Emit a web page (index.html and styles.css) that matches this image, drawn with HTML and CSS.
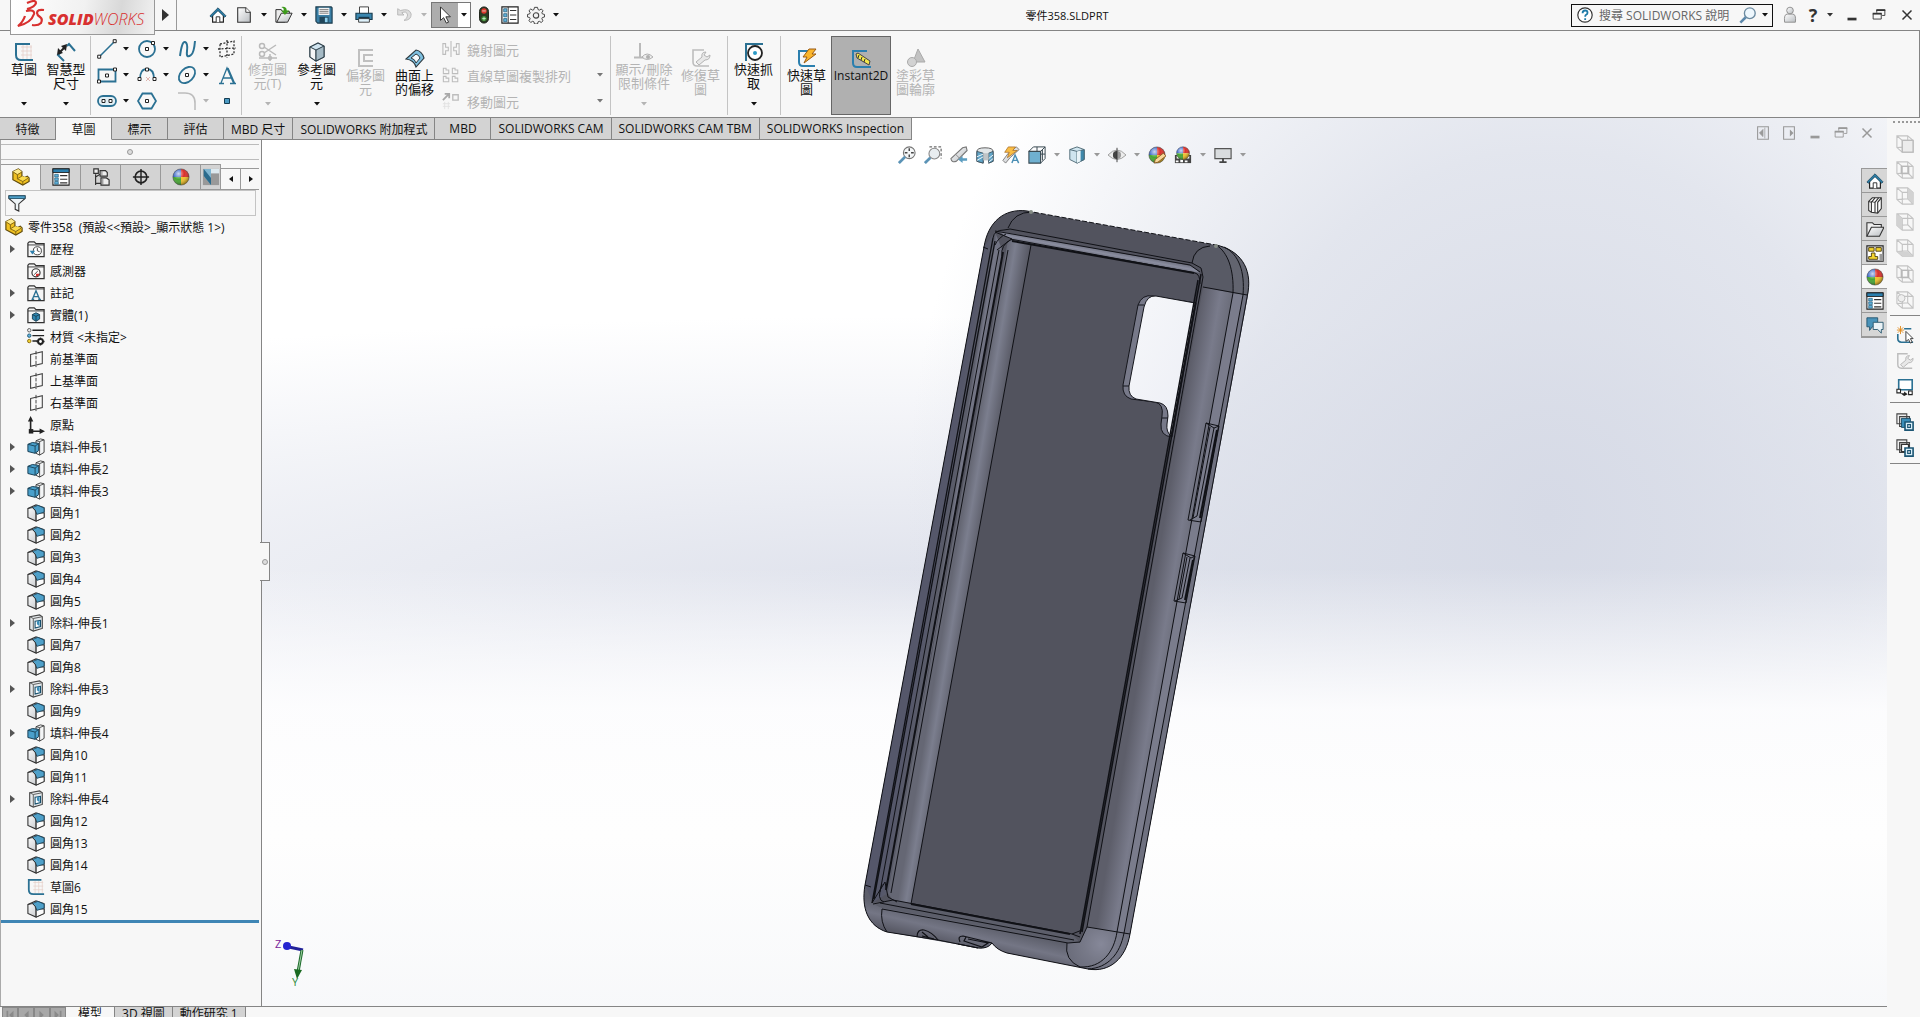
FILE: index.html
```html
<!DOCTYPE html>
<html lang="zh-Hant">
<head>
  <meta charset="UTF-8" />
  <meta name="viewport" content="width=device-width, initial-scale=1.0"/>
  <title>零件358.SLDPRT</title>
  <link rel="stylesheet" href="styles.css">
</head>
<body>

  <!-- Icon set -->
  <svg class="defs" aria-hidden="true">
    <defs>
      <linearGradient id="gBlue" x1="0" y1="0" x2="1" y2="1"><stop offset="0" stop-color="#7cc4e4"/><stop offset="1" stop-color="#256f96"/></linearGradient>
      <linearGradient id="gGrey" x1="0" y1="0" x2="1" y2="1"><stop offset="0" stop-color="#fff"/><stop offset="1" stop-color="#b9bdc1"/></linearGradient>
      <radialGradient id="gShine" cx=".35" cy=".3" r=".7"><stop offset="0" stop-color="#fff" stop-opacity=".75"/><stop offset=".5" stop-color="#fff" stop-opacity="0"/><stop offset="1" stop-color="#000" stop-opacity=".35"/></radialGradient>
    </defs>
    <symbol id="i-down" viewBox="0 0 6 4"><path d="M0 0h6L3 3.5z" fill="currentColor"/></symbol>
    <symbol id="i-home" viewBox="0 0 20 20"><path d="M4 10v8h12v-8l-6-6z" fill="#fff" stroke="#222" stroke-width="1.3"/><path d="M8 18v-6h4v6" fill="#fff" stroke="#222"/><path d="M1 11 10 2l9 9-1.500 1.500L10 5.200 2.500 12.500z" fill="#2b7fa8" stroke="#173f55" stroke-width=".8"/></symbol>
    <symbol id="i-new" viewBox="0 0 20 20"><path d="M3 2h9l5 5v11H3z" fill="url(#gGrey)" stroke="#333" stroke-width="1.200"/><path d="M12 2v5h5" fill="#fff" stroke="#333"/></symbol>
    <symbol id="i-open" viewBox="0 0 20 20"><path d="M1 4h6l1 2h8v3l-5 9H1z" fill="#ececec" stroke="#333" stroke-width="1.100"/><path d="M2 18 7 8h12l-5 10z" fill="url(#gGrey)" stroke="#333" stroke-width="1.100"/><path d="M7 1q6-1 6 4h3l-5 5-4-5h3q0-3-3-4z" fill="#3d9b1c"/></symbol>
    <symbol id="i-save" viewBox="0 0 20 20"><path d="M1 1h17l1 1v17H3l-2-2z" fill="#3a7fa5" stroke="#17384a" stroke-width="1.200"/><path d="M4 2h12v8H4z" fill="#f3f3f3"/><path d="M5 4h10M5 6h10M5 8h10" stroke="#777"/><path d="M5 12h10v7H5z" fill="#20465a"/><path d="M11 13h3v5h-3z" fill="#8fd0ee"/></symbol>
    <symbol id="i-print" viewBox="0 0 20 20"><path d="M5 1h10v8H5z" fill="#fff" stroke="#333"/><path d="M1 8h18v7H1z" fill="#3a86ae" stroke="#17384a" stroke-width="1.200"/><path d="M4 12h12v2H4z" fill="#16384c"/><path d="M4 14h12v4H4z" fill="#dff2fb" stroke="#333"/></symbol>
    <symbol id="i-undo" viewBox="0 0 20 20"><path d="M3 3v7h7L7.500 7.500Q13 5 14 10q0 4-4 6 8 0 8-7-2-7-12-4z" fill="#ddd" stroke="#b5b5b5"/></symbol>
    <symbol id="i-cursor" viewBox="0 0 20 20"><path d="M5 1v15l3.500-3 3 6 2.500-1-3-6h5z" fill="#fff" stroke="#333" stroke-width="1.100"/></symbol>
    <symbol id="i-light" viewBox="0 0 20 20"><rect x="5" y="1" width="10" height="18" rx="5" fill="#2c3a24" stroke="#141a11"/><circle cx="10" cy="5.500" r="3" fill="#e0362c"/><circle cx="10" cy="14" r="3" fill="#3f8a35"/><path d="M10 12v4M8 14h4M8 5.500h4" stroke="#dfe" stroke-width=".8"/></symbol>
    <symbol id="i-list" viewBox="0 0 20 20"><path d="M1 1h18v18H1z" fill="#fff" stroke="#222" stroke-width="1.300"/><path d="M8 1v18" stroke="#222"/><path d="M3 3h3.500v3.500H3zM3 8.500h3.500V12H3zM3 14h3.500v3.500H3z" fill="#5fb2dc" stroke="#1d5674" stroke-width=".8"/><path d="M10 5h7M10 10h7M10 15h7" stroke="#333" stroke-width="1.200"/></symbol>
    <symbol id="i-gear" viewBox="0 0 20 20"><path d="m8.300 1.500h3.400l.6 2.500 1.400.6 2.200-1.300 1.900 2-1.300 2.200.6 1.300 2.400.6v2.800l-2.400.6-.6 1.400 1.300 2.200-2 1.900-2.100-1.300-1.400.6-.6 2.400H8.300l-.6-2.400-1.400-.6-2.200 1.300-1.900-2 1.300-2.100-.6-1.400-2.400-.6V9.400l2.400-.6.6-1.400-1.300-2.200 2-1.900 2.100 1.300L7.700 4z" fill="#f3f3f3" stroke="#444" stroke-width="1.100"/><circle cx="10" cy="10.500" r="3" fill="none" stroke="#444" stroke-width="1.200"/></symbol>
    <symbol id="i-help" viewBox="0 0 20 20"><circle cx="10" cy="10" r="8" fill="#fff" stroke="#333" stroke-width="1.300"/><path d="M7.300 8q0-3 2.800-3 2.700 0 2.700 2.500 0 1.500-1.600 2.300-1 .6-1 2.200M10.200 13.500v2" fill="none" stroke="#1f7ba8" stroke-width="2"/></symbol>
    <symbol id="i-search" viewBox="0 0 20 20"><circle cx="12" cy="8" r="6" fill="#eef7fd" stroke="#6b8aa0" stroke-width="1.500"/><path d="m7.500 12.500-6 6" stroke="#5c88ab" stroke-width="2.800"/></symbol>
    <symbol id="i-user" viewBox="0 0 20 20"><path d="M4 18q-1-9 3-9h6q4 0 3 9z" fill="url(#gGrey)" stroke="#8a8a8a"/><circle cx="10" cy="5" r="3.700" fill="url(#gGrey)" stroke="#8a8a8a"/></symbol>
    <symbol id="i-min" viewBox="0 0 20 20"><path d="M5 13h10v3H5z" fill="currentColor"/></symbol>
    <symbol id="i-restore" viewBox="0 0 20 20"><path d="M7.500 7.500v-3h9v6h-3M3.500 8.500h9v6h-9z" fill="none" stroke="currentColor"/><path d="M7 4.500h10M3 8.500h10" stroke="currentColor" stroke-width="2"/></symbol>
    <symbol id="i-close" viewBox="0 0 20 20"><path d="m5 5 10 10M15 5 5 15" stroke="currentColor" stroke-width="1.600"/></symbol>
    <symbol id="i-paneL" viewBox="0 0 20 20"><path d="M4 3h12v14H4z" fill="none" stroke="currentColor" stroke-width="1.200"/><path d="M10 6v8l-4-4zM12 4v12" fill="currentColor" stroke="currentColor" stroke-width=".8"/></symbol>
    <symbol id="i-paneR" viewBox="0 0 20 20"><path d="M4 3h12v14H4z" fill="none" stroke="currentColor" stroke-width="1.200"/><path d="M11 6v8l4-4z" fill="currentColor"/></symbol>
    <symbol id="i-first" viewBox="0 0 16 16"><path d="M4 3h2v10H4zM12 3v10L7 8z" fill="#8a8a8a"/></symbol>
    <symbol id="i-prevtab" viewBox="0 0 16 16"><path d="M11 3v10L6 8z" fill="#8a8a8a"/></symbol>
    <symbol id="i-nexttab" viewBox="0 0 16 16"><path d="M5 3v10l5-5z" fill="#8a8a8a"/></symbol>
    <symbol id="i-last" viewBox="0 0 16 16"><path d="M10 3h2v10h-2zM4 3v10l5-5z" fill="#8a8a8a"/></symbol>

    <symbol id="i-sketch" viewBox="0 0 20 20"><path d="M7 5h11M7 9h11M7 13h11M9 3v14M13 3v14M17 3v14" stroke="#e6cfc9" stroke-width=".8"/><path d="M16 2H2v11q0 5 5 5h12" fill="none" stroke="#2b7193" stroke-width="2"/></symbol>
    <symbol id="i-dim" viewBox="0 0 20 20"><path d="m11 4 2-2 6 7M8 19l-6-6 3-3" fill="none" stroke="#2b7193" stroke-width="2"/><path d="m3 11 7-7" stroke="#222" stroke-width="2"/><path d="m1 13 1-7 5 5zM11 2l-1 7-5-5z" fill="#222"/></symbol>
    <symbol id="i-line" viewBox="0 0 20 20"><path d="M2 18 18 2" stroke="#2b7193" stroke-width="1.600"/><path d="M.7 16.200h3v3h-3zM16.200.7h3v3h-3z" fill="#fff" stroke="#222"/></symbol>
    <symbol id="i-circle" viewBox="0 0 20 20"><circle cx="10" cy="10" r="8" fill="none" stroke="#2b7193" stroke-width="1.800"/><path d="M8.500 8.500h3v3h-3zM14.500 2.500h3v3h-3z" fill="#fff" stroke="#222"/></symbol>
    <symbol id="i-spline" viewBox="0 0 20 20"><path d="M3 17Q5 2 8 3t2 9 4 4q3-2 4-14" fill="none" stroke="#2b7193" stroke-width="2"/></symbol>
    <symbol id="i-plane" viewBox="0 0 20 20"><path d="m3 5 14-3v13L3 18zM10 1v18M1 10l18-1" fill="none" stroke="#333" stroke-width="1.300" stroke-dasharray="2 1.500"/></symbol>
    <symbol id="i-rect" viewBox="0 0 20 20"><path d="M1.500 4.500h17v12h-17z" fill="none" stroke="#2b7193" stroke-width="1.800"/><path d="M8.500 9h3v3h-3zM.5 15h3v3h-3zM16.500 3h3v3h-3z" fill="#fff" stroke="#222"/></symbol>
    <symbol id="i-arc" viewBox="0 0 20 20"><path d="M3 14Q3 4 10 4t7 10" fill="none" stroke="#2b7193" stroke-width="1.800"/><path d="m9 12 4 4m0-4-4 4" stroke="#e0b4ae"/><path d="M1 12.500h3v3H1zM16 12.500h3v3h-3zM8.500 3h3v3h-3z" fill="#fff" stroke="#222"/></symbol>
    <symbol id="i-ellipse" viewBox="0 0 20 20"><ellipse cx="10" cy="10" rx="9.500" ry="6.500" fill="none" stroke="#2b7193" stroke-width="1.800" transform="rotate(-45 10 10)"/><path d="M8.500 8.500h3v3h-3z" fill="#fff" stroke="#222"/></symbol>
    <symbol id="i-text" viewBox="0 0 20 20"><path d="M2 18.500h5M13 18.500h6M4 18 10 3l6.500 15M11 3l6.500 15M6 13h8" fill="none" stroke="#2b7193" stroke-width="1.300"/></symbol>
    <symbol id="i-slot" viewBox="0 0 20 20"><rect x="1" y="5" width="18" height="10" rx="5" fill="#e3f0f6" stroke="#2b7193" stroke-width="1.800"/><path d="M5 8.500h3v3H5zM12 8.500h3v3h-3z" fill="#fff" stroke="#222"/></symbol>
    <symbol id="i-hex" viewBox="0 0 20 20"><path d="M5.500 2.500h9L19 10l-4.500 7.500h-9L1 10z" fill="none" stroke="#2b7193" stroke-width="1.800"/><path d="M8.500 8.500h3v3h-3z" fill="#fff" stroke="#222"/></symbol>
    <symbol id="i-fillet" viewBox="0 0 20 20"><path d="M1 2h7q10 0 10 10v7" fill="none" stroke="#bdbdbd" stroke-width="1.600"/></symbol>
    <symbol id="i-point" viewBox="0 0 20 20"><path d="M7.500 7.500h5v5h-5z" fill="#4b9ac4" stroke="#153d52"/></symbol>
    <symbol id="i-trim" viewBox="0 0 20 20"><g fill="none" stroke="#bababa" stroke-width="1.500"><circle cx="4" cy="4" r="2.500"/><circle cx="4" cy="12" r="2.500"/><path d="M6 5l12 8M6 11l12-8M1 16h18M12 12v7"/><circle cx="12" cy="16" r="1.500"/></g></symbol>
    <symbol id="i-cube" viewBox="0 0 20 20"><path d="m3 5 8-4 6 3v11l-8 4-6-4z" fill="#cfe3ee" stroke="#2a3c46" stroke-width="1.200"/><path d="m3 5 6 3v11l-6-4z" fill="#f4f6f7" stroke="#2a3c46"/><path d="m9 8 8-4v11l-8 4z" fill="#a5bac5" stroke="#2a3c46"/></symbol>
    <symbol id="i-offset" viewBox="0 0 20 20"><path d="M17 2H3v16h14M17 7H8v6h9" fill="none" stroke="#c0c0c0" stroke-width="2"/></symbol>
    <symbol id="i-surf" viewBox="0 0 20 20"><path d="m1 11 10-9q6 1 8 8l-8 9q-2-7-10-8z" fill="#7ec0e0" stroke="#2e3a40" stroke-width="1.100"/><path d="m6 10 5-4q3 1 4 4l-4 5q-1-4-5-5z" fill="#f7fbfd" stroke="#2e3a40"/></symbol>
    <symbol id="i-mirror" viewBox="0 0 20 20"><path d="M1 4h3v4h3v4H4v4H1zM19 4h-3v4h-3v4h3v4h3zM10 1v18" fill="none" stroke="#bdbdbd" stroke-width="1.200"/></symbol>
    <symbol id="i-pattern" viewBox="0 0 20 20"><path d="M1.500 2.500h3v2h3v4h-6zM11.500 2.500h3v2h3v4h-6zM1.500 11.500h3v2h3v4h-6zM11.500 11.500h3v2h3v4h-6z" fill="none" stroke="#bdbdbd" stroke-width="1.200"/></symbol>
    <symbol id="i-move" viewBox="0 0 20 20"><path d="m1 9 6-6M3 2h5v5" fill="none" stroke="#a9a9a9" stroke-width="2"/><path d="M12 3h6v6h-6z" fill="none" stroke="#bdbdbd" stroke-width="1.500"/><path d="M1 13h8M1 16h8M3 11v8M7 11v8" stroke="#e2e2e2"/></symbol>
    <symbol id="i-relation" viewBox="0 0 20 20"><path d="M6 1v15M0 15.500h13" stroke="#bababa" stroke-width="2"/><path d="M8 15q5-6 11 0-6 5-11 0z" fill="#eee" stroke="#b0b0b0"/><circle cx="14" cy="15" r="2" fill="#b0b0b0"/></symbol>
    <symbol id="i-repair" viewBox="0 0 20 20"><path d="M13 2H2v12q0 4 4 4h12" fill="none" stroke="#bdbdbd" stroke-width="1.600"/><path d="M5 14 11 9q-1-5 4-5l-2 3 3 2 3-2q0 5-5 5l-6 5z" fill="#e8e8e8" stroke="#b3b3b3"/></symbol>
    <symbol id="i-snap" viewBox="0 0 20 20"><path d="M2 19V2h17" fill="none" stroke="#2b7193" stroke-width="2"/><circle cx="11" cy="11" r="7" fill="#fff" stroke="#222" stroke-width="1.800"/><circle cx="11" cy="11" r="2" fill="#2b9ac6"/></symbol>
    <symbol id="i-rapid" viewBox="0 0 20 20"><path d="M12 3H2v11q0 4 4 4h12" fill="none" stroke="#2b7fae" stroke-width="2"/><path d="M12 1h7l-4 5h4L7 15l3-6H6z" fill="#fbb62c" stroke="#9a5b14"/></symbol>
    <symbol id="i-inst" viewBox="0 0 20 20"><path d="M16 2H2v12q0 4 4 4h14" fill="none" stroke="#2b7fae" stroke-width="2"/><path d="m5 5 2-1 12 8-1 4-12-7z" fill="#f5e84b" stroke="#444"/><path d="m8 6-1 3m4-1-1 3m4-1-1 3" stroke="#333"/></symbol>
    <symbol id="i-shade" viewBox="0 0 20 20"><path d="m12 1 7 13H7z" fill="#c2c2c2" stroke="#aaa"/><circle cx="6" cy="14" r="4.500" fill="#d2d2d2" stroke="#aaa"/></symbol>

    <symbol id="i-part" viewBox="0 0 20 20"><path d="M1 8V4l6-3 4 3v5l3 1.500L17 9l2 2v4l-7 4L1 13z" fill="#f0c020" stroke="#5f4a0c" stroke-width="1.300"/><path d="m1 4 6-3 4 3-5 3z" fill="#fce98a"/><path d="m6 12 5-3 8 2.500-7 3.500z" fill="#fbdc4f"/><path d="m1.500 4.500 4.500 3V12l6 3 6.500-4M6 7.500l5-3M12 15v3.500M6 12l5-3" fill="none" stroke="#7d6110"/></symbol>
    <symbol id="i-prop" viewBox="0 0 20 20"><path d="M1 1h18v18H1z" fill="#fff" stroke="#222" stroke-width="1.200"/><path d="M1 1h18v4H1z" fill="#2b7fae" stroke="#222"/><path d="M3 7h4v3H3zM3 11h4v3H3zM3 15h4v3H3z" fill="#5fb2dc" stroke="#1d5674" stroke-width=".7"/><path d="M9 8.500h8M9 12.500h8M9 16.500h8" stroke="#333" stroke-width="1.200"/></symbol>
    <symbol id="i-config" viewBox="0 0 20 20"><path d="M4 7v12M4 10l5-3M4 17h6" fill="none" stroke="#333" stroke-width="1.300"/><path d="M2 1h5v5H2zM9 3h6l2 2v4H9zM10 11h6l3 2v6h-9z" fill="#eee" stroke="#333" stroke-width="1.300"/><path d="M11 3v6M12 11v8" stroke="#777"/></symbol>
    <symbol id="i-target" viewBox="0 0 20 20"><circle cx="10" cy="10" r="6.500" fill="none" stroke="#222" stroke-width="1.800"/><path d="M10 1v18M1 10h18" stroke="#222" stroke-width="1.600"/></symbol>
    <symbol id="i-ball" viewBox="0 0 20 20"><path d="M10 10V1a9 9 0 0 0-9 9z" fill="#3a66c8"/><path d="M10 10h9a9 9 0 0 0-9-9z" fill="#d9302b"/><path d="M10 10H1a9 9 0 0 0 9 9z" fill="#46a533"/><path d="M10 10v9a9 9 0 0 0 9-9z" fill="#f1c12b"/><circle cx="10" cy="10" r="9" fill="url(#gShine)" stroke="#444" stroke-width=".6"/></symbol>
    <symbol id="i-cam" viewBox="0 0 20 20"><path d="M1 1h18v18H1z" fill="#999"/><path d="M2 1h8v18L2 9z" fill="#7fb5d0"/><path d="m2 1 8 10v8L2 9z" fill="#2b6b8c"/><path d="M10 1h9v5h-9z" fill="#dde9ef"/></symbol>
    <symbol id="i-filter" viewBox="0 0 20 20"><path d="M1 2h18v3l-7 6v8l-4-2v-6L1 5z" fill="#eef4f7" stroke="#333" stroke-width="1.200"/><path d="M1 2h18v3H1z" fill="#4ea0c9" stroke="#24536c"/></symbol>
    <symbol id="i-folder" viewBox="0 0 20 20"><path d="M1 18.500v-15L2.500 2H8l2 2h9v14.500z" fill="#f5f5f5" stroke="#333" stroke-width="1.400"/><path d="M1 5.500h18" stroke="#333"/></symbol>
    <symbol id="i-history" viewBox="0 0 20 20"><use href="#i-folder"/><circle cx="11.500" cy="12" r="4.500" fill="#fff" stroke="#333"/><path d="M11.500 9v3l2.500 1" fill="none" stroke="#333"/><path d="M3 12h6l-3 4z" fill="#2b7fae"/></symbol>
    <symbol id="i-sensor" viewBox="0 0 20 20"><use href="#i-folder"/><circle cx="10" cy="12" r="4.500" fill="#fff" stroke="#333" stroke-width="1.300"/><path d="m8 14 4-4" stroke="#333"/><path d="M10 13h4q-1 3-4 3z" fill="#d8302f"/></symbol>
    <symbol id="i-note" viewBox="0 0 20 20"><use href="#i-folder"/><path d="m6 17 4-9.500 4 9.500M7.500 14h5M5 17h3M12.500 17h3" fill="none" stroke="#2b7193" stroke-width="1.500"/></symbol>
    <symbol id="i-solid" viewBox="0 0 20 20"><use href="#i-folder"/><path d="m6 9.500 4-2 4 2v5l-4 2.500-4-2.500z" fill="#2f86b0" stroke="#173f55"/><path d="m6 9.500 4 2 4-2M10 11.500V17" fill="none" stroke="#173f55"/></symbol>
    <symbol id="i-material" viewBox="0 0 20 20"><path d="M6 2.500h13M6 8.500h13M6 14.500h6" stroke="#222" stroke-width="1.600"/><circle cx="2.500" cy="2.500" r="1.900" fill="#eee" stroke="#555"/><circle cx="2.500" cy="8.500" r="1.900" fill="#5fb2dc" stroke="#1d5674"/><circle cx="2.500" cy="14.500" r="1.900" fill="#f3d431" stroke="#8a6a10"/><circle cx="15" cy="15" r="2.700" fill="#fff" stroke="#222" stroke-width="2.200"/><path d="M15 10.500v2M15 17.500v2M10.500 15h2M17.500 15h2" stroke="#222" stroke-width="1.500"/></symbol>
    <symbol id="i-refplane" viewBox="0 0 20 20"><path d="m4 5 13-3v13L4 18z" fill="#fafafa" stroke="#444" stroke-width="1.200"/><path d="M10 1v18" stroke="#333" stroke-dasharray="4 1.500"/></symbol>
    <symbol id="i-origin" viewBox="0 0 20 20"><path d="M4 3v14h13" fill="none" stroke="#222" stroke-width="1.800"/><path d="M1 6 4 0l3 6zM14 14l6 3-6 3z" fill="#222"/><path d="M2 14.500h5v5H2z" fill="#222"/></symbol>
    <symbol id="i-boss" viewBox="0 0 20 20"><path d="m10 3 5-2 4 1v14l-5 3-4-2z" fill="#f3f5f6" stroke="#444" stroke-width="1.100"/><path d="M14 19V4l5-2M14 4l-4-1" fill="none" stroke="#444"/><path d="m1 7 5-2 7 1v8l-4 3-8-2z" fill="#4aa0cb" stroke="#173f55" stroke-width="1.100"/><path d="m1 7 8 2v8M9 9l4-3" fill="none" stroke="#173f55"/></symbol>
    <symbol id="i-round" viewBox="0 0 20 20"><path d="m1 5 9-4 9 3v11l-9 4-9-4z" fill="url(#gGrey)" stroke="#333" stroke-width="1.200"/><path d="M10 10h9v5l-9 4z" fill="#fbfbfb" stroke="#333"/><path d="m6 4 6-2.500 7 3V9l-8 2.500Q10 6 6 4z" fill="#4fa0c9" stroke="#1d4a62"/><path d="m1 5 5-1q4 2 4 7v8" fill="none" stroke="#333"/></symbol>
    <symbol id="i-cut" viewBox="0 0 20 20"><path d="m3 3 11-2 3 2v13l-10 3-4-2z" fill="#e4e8ea" stroke="#444" stroke-width="1.200"/><path d="M7 5v14M7 5l10-2M3 3l4 2" fill="none" stroke="#555"/><path d="m9 8 6-1v7l-6 1.500z" fill="#fff" stroke="#17506e" stroke-width="1.200"/><path d="m11 8 3-.5v6l-3-2z" fill="#3a8db8"/></symbol>

    <symbol id="i-zoomfit" viewBox="0 0 20 20"><circle cx="12.500" cy="7.500" r="6.500" fill="#f4f6f7" stroke="#777" stroke-width="1.200"/><path d="M12.500 2.500v3M12.500 9.500v3M7.500 7.500h3M14.500 7.500h3" stroke="#444" stroke-width="1.600"/><path d="m8 12-7 7" stroke="#5b93b6" stroke-width="3"/></symbol>
    <symbol id="i-zoomarea" viewBox="0 0 20 20"><path d="M6 1h13v13" fill="none" stroke="#333" stroke-dasharray="3 2"/><circle cx="11.500" cy="8.500" r="6" fill="#e8edf0" stroke="#888" stroke-width="1.200"/><path d="m7 13-6 6" stroke="#5b93b6" stroke-width="3"/></symbol>
    <symbol id="i-prev" viewBox="0 0 20 20"><path d="m1 14 13-12 4-1 1 4-12 12q-5 2-6-3z" fill="url(#gGrey)" stroke="#777" stroke-width="1.200"/><path d="m6 9 5 5" stroke="#888"/><path d="m9 15 5-4v2.500h5v3h-5V19z" fill="#5b9dc0"/></symbol>
    <symbol id="i-section" viewBox="0 0 20 20"><path d="M1 6q0-4 9-4t9 4v11l-5 2v-9H8v9l-7-2z" fill="#e2e6e8" stroke="#555"/><path d="M1 6l7 2v11l-7-2zM19 6l-5 2v11l5-2z" fill="#62a6c9" stroke="#3b5461"/><path d="m1 12 7-3M1 16l7-4M14 14l5-4M14 18l5-4" stroke="#fff"/><path d="M8 8h6v8H8z" fill="#bfc4c7"/></symbol>
    <symbol id="i-dyn" viewBox="0 0 20 20"><path d="m1 16 6-8 9-7 3 3-10 9-5 6z" fill="url(#gGrey)" stroke="#777"/><path d="M7 1h8l-3 4h5L6 13l2-6H3z" fill="#f9bd45" stroke="#a66a20" stroke-width=".8"/><path d="m11 19 3.500-9 4 9M12 16h5" fill="none" stroke="#4a8fb5" stroke-width="1.600"/></symbol>
    <symbol id="i-orient" viewBox="0 0 20 20"><path d="M1 6h13v13H1z" fill="#6fb0d0" stroke="#3a4a52" stroke-width="1.200"/><path d="m1 6 5-5h13v13l-5 5M14 6l5-5M10 1v5M14 9h5M16 4v12" fill="none" stroke="#3a4a52" stroke-width="1.100"/></symbol>
    <symbol id="i-style" viewBox="0 0 20 20"><path d="m2 4 8-3 8 3v11l-8 4-8-4z" fill="#cfe5ef" stroke="#486470"/><path d="m10 6 8-2v11l-8 4z" fill="#3f89ac" stroke="#486470"/><path d="m2 4 8 2" stroke="#486470"/><path d="m10 6 4-1v12l-4 2z" fill="#e9f4f8"/></symbol>
    <symbol id="i-eye" viewBox="0 0 20 20"><path d="M0 10q10-11 20 0-10 10-20 0z" fill="#ececec" stroke="#999"/><circle cx="10" cy="10" r="4.500" fill="#999"/><path d="M10 5.500a4.500 4.500 0 0 0 0 9z" fill="#444"/><path d="M10 2v16" stroke="#333"/></symbol>
    <symbol id="i-appear" viewBox="0 0 20 20"><use href="#i-ball"/><path d="m8 15 9-7 3 3-9 7-4 1z" fill="#f7d79b" stroke="#8a5a20"/></symbol>
    <symbol id="i-scene" viewBox="0 0 20 20"><path d="M1 10h18v9H1z" fill="#444"/><path d="M3 11h3v3H3zM7 15h3v3H7zM14 11h3v3h-3zM12 16h3v2h-3zM2 16h3v2H2z" fill="#fff"/><use href="#i-ball" x="2" y="0" width="16" height="16"/></symbol>
    <symbol id="i-monitor" viewBox="0 0 20 20"><path d="M1 3h18v11H1z" fill="#d9dcde" stroke="#555" stroke-width="1.300"/><path d="M10 14v4M6 18h8" stroke="#444" stroke-width="2"/></symbol>

    <symbol id="i-lib" viewBox="0 0 20 20"><path d="m3 6 4-4h10v12l-4 5-7-1-3-2z" fill="#fff" stroke="#333" stroke-width="1.200"/><path d="M6 18V7L3 6M6 7l4-5M10 18V7l4-5M13 19V7l4-5M10 7l-4-1" fill="none" stroke="#333" stroke-width="1.200"/></symbol>
    <symbol id="i-fopen" viewBox="0 0 20 20"><path d="M1 18V3h6l2 2h8v3" fill="#eee" stroke="#333" stroke-width="1.200"/><path d="m1 18 5-10h14l-5 10z" fill="url(#gGrey)" stroke="#333" stroke-width="1.200"/></symbol>
    <symbol id="i-pal" viewBox="0 0 20 20"><path d="M1 2h18v17H1z" fill="#fff" stroke="#222" stroke-width="1.300"/><path d="M3 4h6v4H3zM11 4h6v4h-6zM6 10h4v4h3v3H3v-3h3z" fill="#f6d62f" stroke="#4a3a10"/><path d="M15 11h4v8h-4z" fill="#999"/></symbol>
    <symbol id="i-chat" viewBox="0 0 20 20"><path d="M1 2h12v10H7l-3 4v-4H1z" fill="#4a93b9" stroke="#24536c"/><path d="M8 7h11v8h-2v4l-4-4H8z" fill="#eaf2f6" stroke="#24536c"/></symbol>
    <symbol id="i-wire" viewBox="0 0 20 20"><path d="M1 1h12l6 5v13H7l-6-5zM1 1l6 5h12M7 6v13M13 1v12l6 6M1 14l12-1" fill="none" stroke="#c3c3c3" stroke-width="1.200"/></symbol>
    <symbol id="i-w1" viewBox="0 0 20 20"><use href="#i-wire"/><path d="M7 6h12v13H7z" fill="#ececec" stroke="#bbb" stroke-width="1.500"/></symbol>
    <symbol id="i-w2" viewBox="0 0 20 20"><use href="#i-wire"/><path d="M6 6h8v8H6z" fill="none" stroke="#b8b8b8" stroke-width="1.600"/></symbol>
    <symbol id="i-w3" viewBox="0 0 20 20"><use href="#i-wire"/><path d="M13 1v12l6 6V6z" fill="#d2d2d2"/></symbol>
    <symbol id="i-w4" viewBox="0 0 20 20"><use href="#i-wire"/><path d="M1 1v13l6 5V6z" fill="#d2d2d2"/></symbol>
    <symbol id="i-w5" viewBox="0 0 20 20"><use href="#i-wire"/><path d="M1 14h12l6 5H7z" fill="#d2d2d2"/></symbol>
    <symbol id="i-w7" viewBox="0 0 20 20"><use href="#i-wire"/><circle cx="6" cy="8" r="4" fill="#eee" stroke="#bbb"/></symbol>
    <symbol id="i-newsk" viewBox="0 0 20 20"><path d="M9 3h8M2 9v5q0 4 4 4h13" fill="none" stroke="#2b7193" stroke-width="1.800"/><path d="M5 0v9M1 4.500h8M2 1.500l6 6M8 1.500l-6 6" stroke="#e08a1c"/><path d="M11 6v11l3-2 2 4 2-1-2-4h3z" fill="#fff" stroke="#333"/></symbol>
    <symbol id="i-rel2" viewBox="0 0 20 20"><path d="M3 2h15v11H3z" fill="#fff" stroke="#2b7193" stroke-width="1.800"/><path d="M1 12.500h4v4H1zM14 14.500h4v4h-4z" fill="#fff" stroke="#222" stroke-width="1.200"/><path d="M5 17h4v-2l4 3-4 2z" fill="#222"/></symbol>
    <symbol id="i-lay1" viewBox="0 0 20 20"><path d="M1 1h11v11H1zM4 4h11v11H4z" fill="#eee" stroke="#444" stroke-width="1.200"/><path d="M6 6h10v10H6z" fill="#3a8db8" stroke="#16465f"/><path d="M10 10h9v9h-9z" fill="#d9eef8" stroke="#1d5674" stroke-width="1.800"/><path d="M13 13h3v3h-3z" fill="#fff" stroke="#1d5674" stroke-width="1.300"/></symbol>
    <symbol id="i-lay2" viewBox="0 0 20 20"><path d="M1 1h11v11H1zM4 4h11v11H4z" fill="#eee" stroke="#444" stroke-width="1.200"/><path d="M6 6h8v8H6z" fill="#fff" stroke="#333" stroke-width="1.600"/><path d="M10 10h9v9h-9z" fill="#d9eef8" stroke="#1d5674" stroke-width="1.800"/><path d="M13 13h3v3h-3z" fill="#fff" stroke="#1d5674" stroke-width="1.300"/></symbol>
  </svg>

  <!-- Title bar -->
  <header class="title-bar">
    <div class="logo">
      <svg class="logo-mark" viewBox="0 0 28 28"><g fill="none" stroke="#d8302f" stroke-width="2.200"><path d="M10 3Q19-1 19 3q-1 4-9 6M9 11q9-2 8 3-3 9-16 12 5-4 7-10"/><path d="M27 10q-7-1-7 3 0 2 3 4t1 6q-3 3-9 2"/></g></svg>
      <span class="logo-text"><b>SOLID</b>WORKS</span>
    </div>
    <button class="flyout" aria-label="選單"></button>
    <div class="quick">
      <button aria-label="首頁"><svg><use href="#i-home"/></svg></button>
      <button aria-label="新建"><svg><use href="#i-new"/></svg></button><button class="dd" aria-label="新建選項"><svg><use href="#i-down"/></svg></button>
      <button aria-label="開啟"><svg><use href="#i-open"/></svg></button><button class="dd" aria-label="開啟選項"><svg><use href="#i-down"/></svg></button>
      <button aria-label="儲存"><svg><use href="#i-save"/></svg></button><button class="dd" aria-label="儲存選項"><svg><use href="#i-down"/></svg></button>
      <button aria-label="列印"><svg><use href="#i-print"/></svg></button><button class="dd" aria-label="列印選項"><svg><use href="#i-down"/></svg></button>
      <button aria-label="復原" disabled><svg><use href="#i-undo"/></svg></button><button class="dd off" aria-label="復原選項"><svg><use href="#i-down"/></svg></button>
      <span class="select-group"><button aria-label="選擇"><svg><use href="#i-cursor"/></svg></button><button class="dd" aria-label="選擇選項"><svg><use href="#i-down"/></svg></button></span>
      <button aria-label="重新計算"><svg><use href="#i-light"/></svg></button>
      <button aria-label="檔案屬性"><svg><use href="#i-list"/></svg></button>
      <button aria-label="選項"><svg><use href="#i-gear"/></svg></button><button class="dd" aria-label="選項清單"><svg><use href="#i-down"/></svg></button>
    </div>
    <h1 class="doc-title">零件358.SLDPRT</h1>
    <div class="search">
      <svg><use href="#i-help"/></svg>
      <input type="text" placeholder="搜尋 SOLIDWORKS 說明" aria-label="搜尋 SOLIDWORKS 說明">
      <button aria-label="搜尋"><svg><use href="#i-search"/></svg></button>
      <button class="dd" aria-label="搜尋選項"><svg><use href="#i-down"/></svg></button>
    </div>
    <div class="window-tools">
      <button aria-label="登入"><svg><use href="#i-user"/></svg></button>
      <button class="help">?</button>
      <button class="dd" aria-label="說明選項"><svg><use href="#i-down"/></svg></button>
      <button aria-label="最小化"><svg><use href="#i-min"/></svg></button>
      <button aria-label="還原"><svg><use href="#i-restore"/></svg></button>
      <button aria-label="關閉"><svg><use href="#i-close"/></svg></button>
    </div>
  </header>

  <!-- Ribbon -->
  <section class="ribbon">
    <button class="tool narrow"><svg><use href="#i-sketch"/></svg><span>草圖</span><svg class="arrow"><use href="#i-down"/></svg></button>
    <button class="tool mid"><svg><use href="#i-dim"/></svg><span>智慧型<br>尺寸</span><svg class="arrow"><use href="#i-down"/></svg></button>
    <i class="sep"></i>
    <div class="entity-grid">
      <button aria-label="直線"><svg><use href="#i-line"/></svg><svg class="arrow"><use href="#i-down"/></svg></button>
      <button aria-label="圓"><svg><use href="#i-circle"/></svg><svg class="arrow"><use href="#i-down"/></svg></button>
      <button aria-label="不規則曲線"><svg><use href="#i-spline"/></svg><svg class="arrow"><use href="#i-down"/></svg></button>
      <button aria-label="平面"><svg><use href="#i-plane"/></svg></button>
      <button aria-label="矩形"><svg><use href="#i-rect"/></svg><svg class="arrow"><use href="#i-down"/></svg></button>
      <button aria-label="弧"><svg><use href="#i-arc"/></svg><svg class="arrow"><use href="#i-down"/></svg></button>
      <button aria-label="橢圓"><svg><use href="#i-ellipse"/></svg><svg class="arrow"><use href="#i-down"/></svg></button>
      <button aria-label="文字"><svg><use href="#i-text"/></svg></button>
      <button aria-label="狹槽"><svg><use href="#i-slot"/></svg><svg class="arrow"><use href="#i-down"/></svg></button>
      <button aria-label="多邊形"><svg><use href="#i-hex"/></svg></button>
      <button class="off" aria-label="草圖圓角"><svg><use href="#i-fillet"/></svg><svg class="arrow"><use href="#i-down"/></svg></button>
      <button aria-label="點"><svg><use href="#i-point"/></svg></button>
    </div>
    <i class="sep"></i>
    <button class="tool off"><svg><use href="#i-trim"/></svg><span>修剪圖<br>元(T)</span><svg class="arrow"><use href="#i-down"/></svg></button>
    <button class="tool"><svg><use href="#i-cube"/></svg><span>參考圖<br>元</span><svg class="arrow"><use href="#i-down"/></svg></button>
    <button class="tool plain off"><svg><use href="#i-offset"/></svg><span>偏移圖<br>元</span></button>
    <button class="tool plain"><svg><use href="#i-surf"/></svg><span>曲面上<br>的偏移</span></button>
    <div class="op-list">
      <button><svg><use href="#i-mirror"/></svg><span>鏡射圖元</span></button>
      <button><svg><use href="#i-pattern"/></svg><span>直線草圖複製排列</span><svg class="arrow"><use href="#i-down"/></svg></button>
      <button><svg><use href="#i-move"/></svg><span>移動圖元</span><svg class="arrow"><use href="#i-down"/></svg></button>
    </div>
    <i class="sep"></i>
    <button class="tool wide off"><svg><use href="#i-relation"/></svg><span>顯示/刪除<br>限制條件</span><svg class="arrow"><use href="#i-down"/></svg></button>
    <button class="tool plain off"><svg><use href="#i-repair"/></svg><span>修復草<br>圖</span></button>
    <i class="sep"></i>
    <button class="tool"><svg><use href="#i-snap"/></svg><span>快速抓<br>取</span><svg class="arrow"><use href="#i-down"/></svg></button>
    <i class="sep"></i>
    <button class="tool plain"><svg><use href="#i-rapid"/></svg><span>快速草<br>圖</span></button>
    <button class="tool plain pressed"><svg><use href="#i-inst"/></svg><span>Instant2D</span></button>
    <button class="tool plain off"><svg><use href="#i-shade"/></svg><span>塗彩草<br>圖輪廓</span></button>
  </section>

  <div class="work">
    <main class="main">
      <div class="tab-row">
        <nav class="cmd-tabs">
          <button>特徵</button>
          <button class="active">草圖</button>
          <button>標示</button>
          <button>評估</button>
          <button>MBD 尺寸</button>
          <button>SOLIDWORKS 附加程式</button>
          <button>MBD</button>
          <button>SOLIDWORKS CAM</button>
          <button>SOLIDWORKS CAM TBM</button>
          <button>SOLIDWORKS Inspection</button>
        </nav>
        <div class="doc-tools">
          <button aria-label="左側窗格"><svg><use href="#i-paneL"/></svg></button>
          <button aria-label="右側窗格"><svg><use href="#i-paneR"/></svg></button>
          <button aria-label="最小化文件"><svg><use href="#i-min"/></svg></button>
          <button aria-label="還原文件"><svg><use href="#i-restore"/></svg></button>
          <button aria-label="關閉文件"><svg><use href="#i-close"/></svg></button>
        </div>
      </div>

      <div class="main-row">
        <!-- Feature tree -->
        <aside class="panel">
          <div class="splitter"><i class="grip"></i></div>
          <div class="panel-tabs">
            <button class="active" aria-label="特徵樹"><svg><use href="#i-part"/></svg></button>
            <button aria-label="屬性"><svg><use href="#i-prop"/></svg></button>
            <button aria-label="模型組態"><svg><use href="#i-config"/></svg></button>
            <button aria-label="標註尺寸專家"><svg><use href="#i-target"/></svg></button>
            <button aria-label="顯示"><svg><use href="#i-ball"/></svg></button>
            <button class="clipped" aria-label="CAM"><svg><use href="#i-cam"/></svg></button>
            <button class="scroll left" aria-label="向左"></button>
            <button class="scroll right" aria-label="向右"></button>
          </div>
          <label class="filter"><svg><use href="#i-filter"/></svg><input type="text" aria-label="篩選"></label>
          <ul class="tree">
            <li class="root"><svg><use href="#i-part"/></svg>零件358&nbsp; (預設&lt;&lt;預設&gt;_顯示狀態 1&gt;)</li>
            <li class="has-kids"><svg><use href="#i-history"/></svg>歷程</li>
            <li><svg><use href="#i-sensor"/></svg>感測器</li>
            <li class="has-kids"><svg><use href="#i-note"/></svg>註記</li>
            <li class="has-kids"><svg><use href="#i-solid"/></svg>實體(1)</li>
            <li><svg><use href="#i-material"/></svg>材質 &lt;未指定&gt;</li>
            <li><svg><use href="#i-refplane"/></svg>前基準面</li>
            <li><svg><use href="#i-refplane"/></svg>上基準面</li>
            <li><svg><use href="#i-refplane"/></svg>右基準面</li>
            <li><svg><use href="#i-origin"/></svg>原點</li>
            <li class="has-kids"><svg><use href="#i-boss"/></svg>填料-伸長1</li>
            <li class="has-kids"><svg><use href="#i-boss"/></svg>填料-伸長2</li>
            <li class="has-kids"><svg><use href="#i-boss"/></svg>填料-伸長3</li>
            <li><svg><use href="#i-round"/></svg>圓角1</li>
            <li><svg><use href="#i-round"/></svg>圓角2</li>
            <li><svg><use href="#i-round"/></svg>圓角3</li>
            <li><svg><use href="#i-round"/></svg>圓角4</li>
            <li><svg><use href="#i-round"/></svg>圓角5</li>
            <li class="has-kids"><svg><use href="#i-cut"/></svg>除料-伸長1</li>
            <li><svg><use href="#i-round"/></svg>圓角7</li>
            <li><svg><use href="#i-round"/></svg>圓角8</li>
            <li class="has-kids"><svg><use href="#i-cut"/></svg>除料-伸長3</li>
            <li><svg><use href="#i-round"/></svg>圓角9</li>
            <li class="has-kids"><svg><use href="#i-boss"/></svg>填料-伸長4</li>
            <li><svg><use href="#i-round"/></svg>圓角10</li>
            <li><svg><use href="#i-round"/></svg>圓角11</li>
            <li class="has-kids"><svg><use href="#i-cut"/></svg>除料-伸長4</li>
            <li><svg><use href="#i-round"/></svg>圓角12</li>
            <li><svg><use href="#i-round"/></svg>圓角13</li>
            <li><svg><use href="#i-round"/></svg>圓角14</li>
            <li><svg><use href="#i-sketch"/></svg>草圖6</li>
            <li><svg><use href="#i-round"/></svg>圓角15</li>
          </ul>
          <div class="rollback"></div>
          <button class="panel-handle" aria-label="收合"><i class="grip"></i></button>
        </aside>

        <!-- Graphics area -->
        <section class="viewport">
          <div class="hud">
            <button aria-label="最適當大小"><svg><use href="#i-zoomfit"/></svg></button>
            <button aria-label="局部放大"><svg><use href="#i-zoomarea"/></svg></button>
            <button aria-label="前一個視角"><svg><use href="#i-prev"/></svg></button>
            <button aria-label="剖面視角"><svg><use href="#i-section"/></svg></button>
            <button aria-label="動態註記"><svg><use href="#i-dyn"/></svg></button>
            <button aria-label="視角方位"><svg><use href="#i-orient"/></svg></button><button class="dd" aria-label="方位選項"><svg><use href="#i-down"/></svg></button>
            <button aria-label="顯示樣式"><svg><use href="#i-style"/></svg></button><button class="dd" aria-label="樣式選項"><svg><use href="#i-down"/></svg></button>
            <button aria-label="隱藏/顯示"><svg><use href="#i-eye"/></svg></button><button class="dd" aria-label="顯示選項"><svg><use href="#i-down"/></svg></button>
            <button aria-label="編輯外觀"><svg><use href="#i-appear"/></svg></button>
            <button aria-label="套用全景"><svg><use href="#i-scene"/></svg></button><button class="dd" aria-label="全景選項"><svg><use href="#i-down"/></svg></button>
            <button aria-label="檢視設定"><svg><use href="#i-monitor"/></svg></button><button class="dd" aria-label="檢視選項"><svg><use href="#i-down"/></svg></button>
          </div>

          <svg class="model" viewBox="825 168 500 838" preserveAspectRatio="xMidYMin meet">
            <defs>
              <linearGradient id="wallL" gradientUnits="userSpaceOnUse" x1="1006" y1="250" x2="1030" y2="254"><stop offset="0" stop-color="#656774"/><stop offset=".35" stop-color="#7b7e8e"/><stop offset="1" stop-color="#555661"/></linearGradient>
              <linearGradient id="rimL" gradientUnits="userSpaceOnUse" x1="984" y1="247" x2="1003" y2="250"><stop offset="0" stop-color="#55576a"/><stop offset=".45" stop-color="#5b5d69"/><stop offset=".6" stop-color="#747686"/><stop offset="1" stop-color="#6c6e7c"/></linearGradient>
              <linearGradient id="wallR" gradientUnits="userSpaceOnUse" x1="1203" y1="287" x2="1233" y2="292"><stop offset="0" stop-color="#5d5e6a"/><stop offset=".6" stop-color="#797b8b"/><stop offset="1" stop-color="#6b6d7a"/></linearGradient>
              <linearGradient id="wallB" gradientUnits="userSpaceOnUse" x1="980" y1="924" x2="974" y2="950"><stop offset="0" stop-color="#5d5f6b"/><stop offset=".5" stop-color="#747685"/><stop offset="1" stop-color="#585965"/></linearGradient>
              <linearGradient id="lip" gradientUnits="userSpaceOnUse" x1="1100" y1="246" x2="1098" y2="257"><stop offset="0" stop-color="#5a5c68"/><stop offset=".6" stop-color="#8b8ea0"/><stop offset="1" stop-color="#62646f"/></linearGradient>
              <radialGradient id="cornR" gradientUnits="userSpaceOnUse" cx="1101" cy="944" r="34"><stop offset="0" stop-color="#868899"/><stop offset=".5" stop-color="#777988"/><stop offset="1" stop-color="#6b6d7b"/></radialGradient>
              <linearGradient id="hole" x1="0" y1="0" x2="1" y2="1"><stop offset="0" stop-color="#f6f7fa"/><stop offset="1" stop-color="#eceef5"/></linearGradient>
            </defs>
            <!-- body silhouette -->
            <path d="M984 247C988 222 1004 208 1027 211L1216 245C1240 250 1252 268 1248 292L1130 934C1126 958 1110 973 1088 969L1007 953Q997 950 992 943 988 949 978 948L958 944 938 940 887 932C868 926 861 908 865 885z" fill="#52535e"/>
            <path d="M984 247 865 885 872 903 888 893 1003 252 995 232z" fill="url(#rimL)"/>
            <path d="M1008 240 888 893 893 901 911 904 1031 245z" fill="url(#wallL)"/>
            <path d="M1203 277V287L1087 927 1080 943 1110 950 1117 932 1233 293 1222 262z" fill="url(#wallR)"/>
            <path d="M1233 293 1117 932 1130 934 1248 295z" fill="#7a7c8c"/>
            <path d="M1243 295 1124 933 1130 934 1248 295z" fill="#6f7180"/>
            <path d="M865 885 873 903 893 900 911 904 1072 934 1080 943 1067 943Q1066 957 1080 967L1007 953Q997 950 992 943 988 949 978 948L887 932C868 926 861 908 865 885z" fill="url(#wallB)"/>
            <path d="M1087 927 1130 934C1126 958 1110 973 1088 969 1068 965 1066 957 1067 943L1080 943z" fill="url(#cornR)"/>
            <path d="M1192 263Q1196 248 1210 246L1216 245C1228 252 1234 270 1233 293L1203 287V270z" fill="#585a65"/>
            <path d="M1216 245C1228 252 1234 270 1233 293L1248 295C1252 268 1240 250 1216 245z" fill="#62646f"/>
            <path d="M998 231 1192 266 1200 273 1012 240z" fill="url(#lip)"/>
            <path d="M873 904 893 900 1072 934 1080 943 882 908z" fill="#5c5e6a"/>
            <!-- camera cutout -->
            <path d="M1138 305Q1142 294 1153 296L1196 303 1172 437Q1160 436 1161 424L1162 416Q1164 404 1155 402L1131 399Q1122 396 1123 385z" fill="#777989" stroke="#15161c"/>
            <path d="M1144 307Q1147 295 1156 296L1195 303 1171 436Q1166 432 1167 424L1168 416Q1168 405 1160 403L1136 399Q1128 396 1129 386z" fill="url(#hole)" stroke="#15161c"/>
            <path d="M1138 305h6M1123 386h6M1162 418h6" stroke="#15161c"/>
            <!-- edges -->
            <g fill="none" stroke="#101116" stroke-width="1">
              <path d="M1027 211C1004 208 988 222 984 247L865 885C861 908 868 926 887 932L938 940 958 944 978 948Q988 949 992 943 997 950 1007 953L1088 969C1110 973 1126 958 1130 934L1248 292C1252 268 1240 250 1216 245"/>
              <path d="M1027 211 1216 245" stroke-dasharray="5 2"/>
              <path d="M1008 228Q1014 212 1032 212M983 247 988 249"/>
              <path d="M993 238 872 903M995 241 874 899" stroke-width="1.300"/>
              <path d="M999 250 880 892M1008 250 891 893"/>
              <path d="M1003 252 886 890" stroke-width="2"/>
              <path d="M1031 245 911 904"/>
              <path d="M993 238Q994 230 1004 230L1010 229 1192 263 1201 268 1203 277M995 231 1190 265 1200 272M1010 239 1195 273"/>
              <path d="M1012 241 1194 273" stroke-width="2"/>
              <path d="M995 232 1012 239Q1000 245 1002 256M995 245Q998 238 1006 234M997 250 1010 240"/>
              <path d="M1203 277 1087 927 1080 942"/>
              <path d="M1201 274 1082 932M1198 280 1080 934" stroke-width="1.500"/>
              <path d="M1195 273Q1200 274 1200 284M1192 263Q1194 247 1210 246"/>
              <path d="M1203 287 1247 295M1087 927 1130 934"/>
              <path d="M1216 245C1228 252 1234 270 1233 293L1117 932C1114 952 1102 968 1080 967"/>
              <path d="M1224 247C1239 254 1245 272 1243 295L1124 933C1120 954 1108 968 1088 969"/>
              <path d="M873 904 893 900 1072 934 1080 937M880 903 1074 940M882 909 1068 943 1080 942M1072 934 1082 930"/>
              <path d="M911 904 1070 934" stroke-width="2"/>
              <path d="M865 885 871 887M872 903 885 882 888 897 897 902M882 884Q876 900 884 902M882 909Q880 922 887 932M1067 943Q1064 960 1080 967"/>
              <path d="M917 937Q917 929 924 930 932 932 938 940M922 936 934 939M922 932 928 937M960 942Q957 936 963 936L992 943M966 937 964 941 982 947 988 943 968 939M958 944 978 948" stroke-width="1.200"/>
              <path d="M1206 423 1219 426 1201 522 1188 520zM1210 427 1193 518M1214 428 1197 516 1190 520M1206 423 1214 428 1219 426"/>
              <path d="M1217 430 1200 518" stroke-width="2"/>
              <path d="M1183 553 1195 556 1186 603 1174 601zM1187 557 1179 599M1190 558 1182 598 1175 601M1183 553 1191 558 1195 556"/>
              <path d="M1193 560 1185 600" stroke-width="2"/>
            </g>
            <circle cx="1031" cy="212" r="2" fill="#858c85"/><circle cx="1216" cy="246" r="2" fill="#858c85"/>
          </svg>

          <svg class="triad" viewBox="0 0 34 54">
            <path d="M10 14 29 18" stroke="#22229a" stroke-width="3"/><circle cx="13" cy="14" r="4" fill="#2424d0"/>
            <path d="m28 18-4 22" stroke="#1c6a2a" stroke-width="3"/><path d="m28 18-4 22" stroke="#9fd0a4"/><path d="m20 37 8 1-5 9z" fill="#1a6a22"/>
            <text x="1" y="16" class="axis z">Z</text><text x="18" y="54" class="axis y">Y</text>
          </svg>

          <nav class="task-pane">
            <button aria-label="資源"><svg><use href="#i-home"/></svg></button>
            <button aria-label="Design Library"><svg><use href="#i-lib"/></svg></button>
            <button aria-label="檔案總管"><svg><use href="#i-fopen"/></svg></button>
            <button aria-label="視圖調色盤"><svg><use href="#i-pal"/></svg></button>
            <button class="active" aria-label="外觀"><svg><use href="#i-ball"/></svg></button>
            <button aria-label="自訂屬性"><svg><use href="#i-prop"/></svg></button>
            <button aria-label="論壇"><svg><use href="#i-chat"/></svg></button>
          </nav>
        </section>
      </div>

      <footer class="bottom-tabs">
        <div class="nav-buttons">
          <button aria-label="第一個"><svg><use href="#i-first"/></svg></button>
          <button aria-label="上一個"><svg><use href="#i-prevtab"/></svg></button>
          <button aria-label="下一個"><svg><use href="#i-nexttab"/></svg></button>
          <button aria-label="最後一個"><svg><use href="#i-last"/></svg></button>
        </div>
        <button class="active">模型</button>
        <button>3D 視圖</button>
        <button>動作研究 1</button>
      </footer>
    </main>

    <!-- Docked toolbar -->
    <aside class="dock">
      <div class="dock-group">
        <button aria-label="前視"><svg><use href="#i-w1"/></svg></button>
        <button aria-label="後視"><svg><use href="#i-w2"/></svg></button>
        <button aria-label="左視"><svg><use href="#i-w3"/></svg></button>
        <button aria-label="右視"><svg><use href="#i-w4"/></svg></button>
        <button aria-label="上視"><svg><use href="#i-w5"/></svg></button>
        <button aria-label="下視"><svg><use href="#i-w2"/></svg></button>
        <button aria-label="等角視"><svg><use href="#i-w7"/></svg></button>
      </div>
      <div class="dock-group">
        <button aria-label="新草圖"><svg><use href="#i-newsk"/></svg></button>
        <button aria-label="修復"><svg><use href="#i-repair"/></svg></button>
        <button aria-label="移動草圖"><svg><use href="#i-rel2"/></svg></button>
      </div>
      <div class="dock-group">
        <button aria-label="圖層"><svg><use href="#i-lay1"/></svg></button>
        <button aria-label="圖層外框"><svg><use href="#i-lay2"/></svg></button>
      </div>
    </aside>
  </div>

</body>
</html>
```
FILE: styles.css
```css
* {
  box-sizing: border-box;
}

body {
  margin: 0;
  height: 100vh;
  display: flex;
  flex-direction: column;
  overflow: hidden;
  background: #f7f7f7;
  color: #111;
  font-family: "Open Sans", "Noto Sans CJK TC", sans-serif;
  font-size: 12px;
}

button, input {
  font: inherit;
  color: inherit;
  border: 0;
  padding: 0;
  margin: 0;
  background: none;
  white-space: nowrap;
}

input {
  outline: none;
  min-width: 0;
}

svg {
  width: 18px;
  height: 18px;
  display: block;
  flex: none;
}

.defs {
  position: absolute;
  width: 0;
  height: 0;
}

button {
  display: flex;
  align-items: center;
  justify-content: center;
}

.arrow, .dd svg {
  width: 6px;
  height: 4px;
}

/* title bar */
.title-bar {
  height: 31px;
  flex: none;
  display: flex;
  align-items: center;
  border-bottom: 1px solid #858585;
}

.logo {
  width: 145px;
  height: 35px;
  margin-left: 10px;
  align-self: flex-start;
  flex: none;
  position: relative;
  z-index: 2;
  display: flex;
  align-items: center;
  gap: 3px;
  padding-left: 6px;
  border: 1px solid #999;
  border-top: 0;
  background: linear-gradient(100deg, #fff, #f1f1f1 50%, #d8d8d8 75%, #f2f2f2);
  color: #d8302f;
}

.logo-mark {
  width: 28px;
  height: 28px;
  margin-bottom: 6px;
}

.logo-text {
  font-size: 16px;
  font-style: italic;
  font-weight: 300;
  line-height: 20px;
  margin-top: 4px;
}

.logo-text b {
  font-weight: 800;
}

.flyout {
  width: 22px;
  height: 30px;
  flex: none;
  border-right: 1px solid #999;
}

.flyout::before {
  content: "";
  border-left: 7px solid #333;
  border-top: 6px solid transparent;
  border-bottom: 6px solid transparent;
}

.quick {
  display: flex;
  align-items: center;
  margin-left: 28px;
}

.quick button {
  width: 26px;
  height: 25px;
}

.quick .dd {
  width: 14px;
}

.off {
  color: #b4b4b4;
}

.select-group {
  display: flex;
  border: 1px solid #777;
}

.select-group button {
  height: 24px;
  background: #adadad;
}

.select-group .dd {
  width: 12px;
  background: #fff;
}

.doc-title {
  flex: 1;
  margin: 0;
  text-align: center;
  font-size: 11px;
  font-weight: 400;
}

.search {
  width: 202px;
  height: 23px;
  display: flex;
  align-items: center;
  gap: 5px;
  padding: 0 4px;
  border: 1px solid #111;
}

.search input {
  flex: 1;
}

.search input::placeholder {
  color: #666;
  opacity: 1;
}

.window-tools {
  display: flex;
  align-items: center;
  justify-content: space-between;
  width: 135px;
  margin: 0 4px 0 8px;
  color: #333;
}

.help {
  font-size: 18px;
  font-weight: 700;
}

/* ribbon */
.ribbon {
  height: 87px;
  flex: none;
  display: flex;
  padding: 5px 0 2px 4px;
  border-right: 1px solid #858585;
  border-bottom: 1px solid #858585;
}

.sep {
  width: 1px;
  margin: 0 1px 0 2px;
  background: #c4c4c4;
  flex: none;
}

.tool {
  width: 49px;
  flex: none;
  flex-direction: column;
  justify-content: flex-start;
  padding: 6px 0 9px;
  font-size: 13px;
  line-height: 14px;
}

.tool > svg:first-child {
  width: 20px;
  height: 20px;
}

.tool .arrow {
  width: 6px;
  height: 4px;
  margin-top: auto;
}

.tool.narrow {
  width: 40px;
}

.tool.mid {
  width: 44px;
}

.tool.wide {
  width: 64px;
}

.tool.plain {
  padding-top: 12px;
}

.tool.pressed {
  width: 60px;
  font-size: 12px;
  background: #b0b0b0;
  border: 1px solid #666;
}

.entity-grid {
  display: grid;
  grid-template-columns: repeat(3, 40px) 22px;
  grid-template-rows: repeat(3, 26px);
  padding-left: 5px;
}

.entity-grid button {
  justify-content: flex-start;
  gap: 6px;
}

.entity-grid svg:first-child {
  width: 20px;
  height: 20px;
}

.op-list {
  width: 169px;
  display: flex;
  flex-direction: column;
  padding-left: 3px;
}

.op-list button {
  height: 26px;
  justify-content: flex-start;
  gap: 7px;
  font-size: 13px;
  color: #b4b4b4;
}

.op-list .arrow {
  margin-left: auto;
  margin-right: 5px;
  color: #777;
}

/* work area */
.work {
  flex: 1;
  min-height: 0;
  display: flex;
}

.main {
  flex: 1;
  min-width: 0;
  display: flex;
  flex-direction: column;
  background:
    linear-gradient(rgba(255, 255, 255, 0) 50%, rgba(253, 253, 254, 0.95) 66%, #fefefe 80%, #f7f8fa),
    radial-gradient(ellipse 34% 80% at 82% 44%, #d6dae6, rgba(217, 221, 232, 0.75) 50%, rgba(255, 255, 255, 0) 100%),
    radial-gradient(ellipse 90% 30% at 50% 52%, #dfe2ec, rgba(255, 255, 255, 0) 100%),
    #fff;
}

.tab-row {
  height: 22px;
  flex: none;
  display: flex;
  justify-content: space-between;
}

.cmd-tabs {
  display: flex;
}

.cmd-tabs button {
  min-width: 56px;
  padding: 0 7px;
  background: #d3d3d3;
  border-right: 1px solid #858585;
  border-bottom: 1px solid #858585;
}

.cmd-tabs .active {
  background: #f7f7f7;
  border-bottom-color: #f7f7f7;
}

.doc-tools {
  display: flex;
  gap: 8px;
  padding: 8px 11px 0 0;
  color: #999;
}

.main-row {
  flex: 1;
  min-height: 0;
  display: flex;
}

/* feature panel */
.panel {
  width: 262px;
  flex: none;
  position: relative;
  background: #f7f7f7;
  border-left: 1px solid #aaa;
  border-right: 1px solid #858585;
  padding: 4px 2px 0 0;
}

.splitter {
  height: 16px;
  display: flex;
  align-items: center;
  justify-content: center;
  border-top: 1px solid #bbb;
  border-bottom: 1px solid #bbb;
}

.grip {
  width: 6px;
  height: 6px;
  border: 1px solid #999;
  border-radius: 50%;
  background: #ddd;
}

.panel-tabs {
  display: flex;
  height: 26px;
  margin-top: 4px;
  overflow: hidden;
}

.panel-tabs button {
  width: 40px;
  flex: none;
  background: #d3d3d3;
  border: 1px solid #999;
  border-left: 0;
}

.panel-tabs .active {
  background: #f7f7f7;
  border-bottom-color: #f7f7f7;
}

.panel-tabs .clipped {
  width: 20px;
  overflow: hidden;
}

.panel-tabs .scroll {
  width: 20px;
  margin-top: 4px;
  background: #f7f7f7;
}

.scroll::before {
  content: "";
  border: 3px solid transparent;
}

.scroll.left::before {
  border-right: 4px solid #111;
  border-left: 0;
}

.scroll.right::before {
  border-left: 4px solid #111;
  border-right: 0;
}

.filter {
  display: flex;
  align-items: center;
  height: 26px;
  margin: 0 3px 0 4px;
  padding-left: 2px;
  border: 1px solid #c4c4c4;
}

.filter input {
  flex: 1;
}

.tree {
  list-style: none;
  margin: 0;
  padding: 0;
}

.tree li {
  display: flex;
  align-items: center;
  gap: 5px;
  height: 22px;
  padding-left: 26px;
  white-space: nowrap;
}

.tree .root {
  padding-left: 4px;
}

.tree .has-kids {
  padding-left: 9px;
}

.has-kids::before {
  content: "";
  margin-right: 7px;
  border-left: 5px solid #555;
  border-top: 4px solid transparent;
  border-bottom: 4px solid transparent;
}

.rollback {
  height: 3px;
  background: #3f86b5;
}

.panel-handle {
  position: absolute;
  left: 259px;
  top: 402px;
  width: 10px;
  height: 39px;
  z-index: 2;
  background: #f7f7f7;
  border: 1px solid #858585;
  border-left: 0;
}

/* graphics area */
.viewport {
  flex: 1;
  min-width: 0;
  position: relative;
  display: flex;
  flex-direction: column;
  align-items: center;
}

.hud {
  display: flex;
  flex: none;
  height: 28px;
  padding: 2px 6px 0 0;
}

.hud button {
  width: 26px;
}

.hud .dd {
  width: 14px;
  color: #999;
}

.model {
  flex: 1;
  width: 500px;
  min-height: 0;
}

.triad {
  position: absolute;
  left: 12px;
  bottom: 20px;
  width: 34px;
  height: 54px;
  overflow: visible;
}

.axis {
  font-size: 11px;
}

.axis.z {
  fill: #7a1f9a;
}

.axis.y {
  fill: #2d8a3a;
}

.task-pane {
  position: absolute;
  right: 0;
  top: 28px;
  width: 26px;
  border: 1px solid #999;
  border-right: 0;
}

.task-pane button {
  width: 100%;
  height: 24px;
  background: #d6d6d6;
  border-bottom: 1px solid #999;
}

.task-pane .active {
  background: #f7f7f7;
}

/* bottom tabs, cut by the window edge */
.bottom-tabs {
  height: 11px;
  flex: none;
  display: flex;
  overflow: hidden;
  background: #f7f7f7;
  border-top: 1px solid #858585;
}

.bottom-tabs > button {
  height: 14px;
  padding: 0 7px;
  background: #d3d3d3;
  border-right: 1px solid #858585;
  line-height: 14px;
}

.bottom-tabs > .active {
  background: #f7f7f7;
  padding: 0 12px;
}

.nav-buttons {
  display: flex;
  height: 16px;
  padding-left: 2px;
}

.nav-buttons button {
  width: 16px;
  background: #a8a8a8;
  border: 1px solid #888;
}

.nav-buttons svg {
  width: 14px;
  height: 14px;
}

/* docked toolbar */
.dock {
  width: 33px;
  flex: none;
  padding-top: 3px;
}

.dock::before {
  content: "";
  display: block;
  margin: 0 0 2px 6px;
  border-top: 2px dotted #999;
}

.dock-group {
  display: flex;
  flex-direction: column;
  align-items: center;
  gap: 8px;
  margin-left: 3px;
  padding: 10px 0 6px;
  border-bottom: 1px solid #858585;
}
```
